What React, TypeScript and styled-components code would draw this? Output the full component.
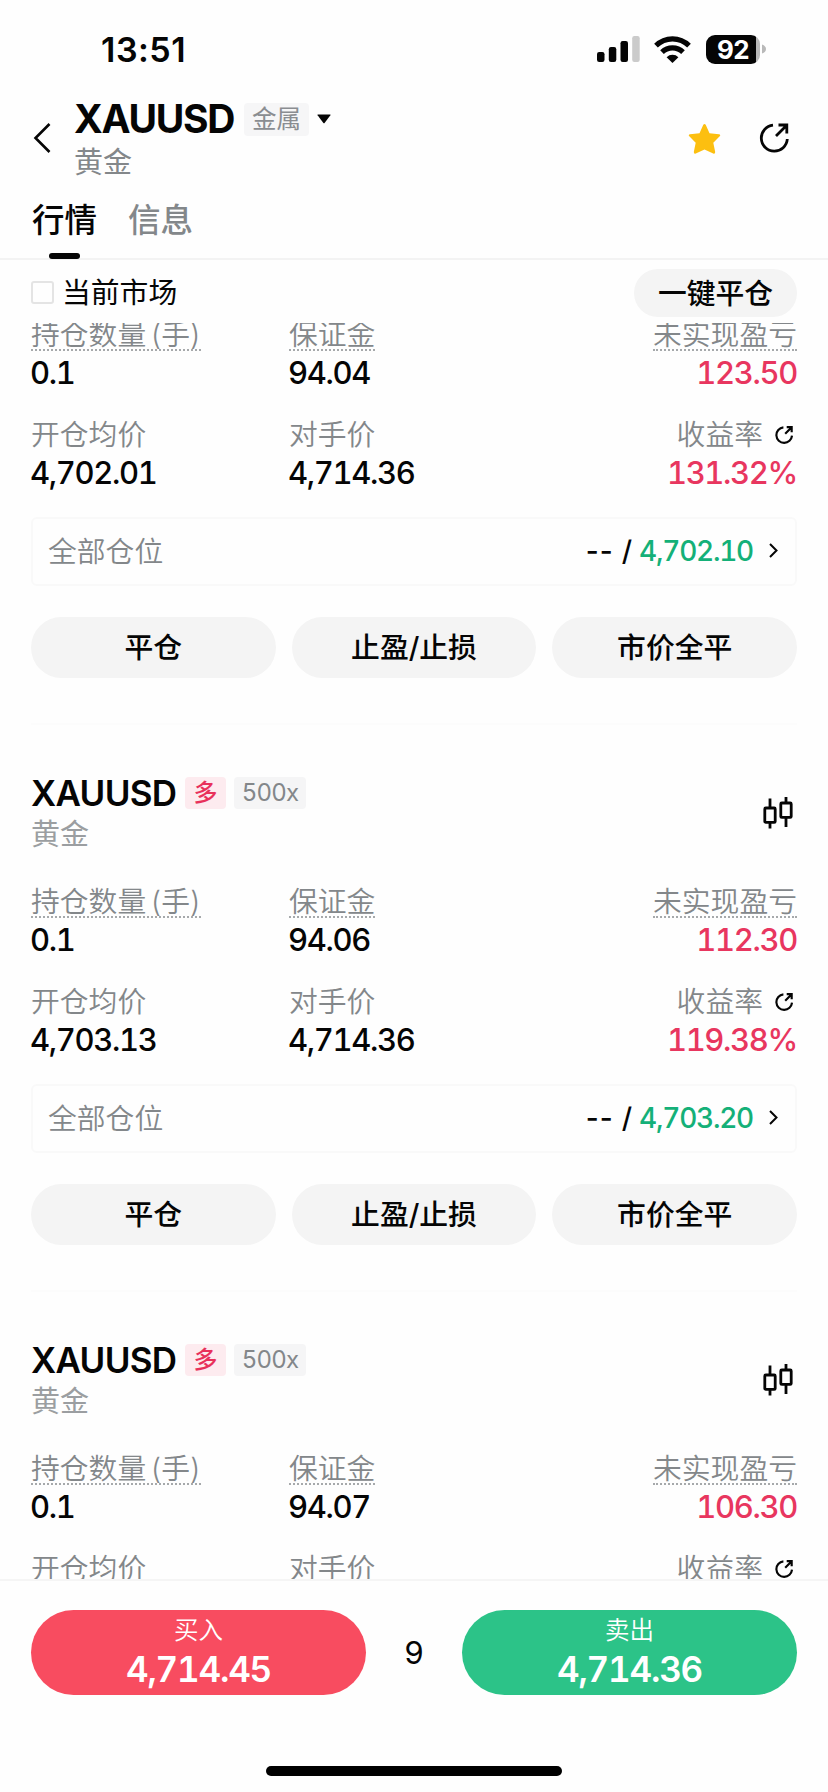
import React from 'react';
import styled, { createGlobalStyle } from 'styled-components';

const GlobalStyle = createGlobalStyle`
  * { box-sizing: border-box; }
  body { margin: 0; background: #fefefe; }
  button { border: 0; padding: 0; font: inherit; color: inherit; }
`;

const Screen = styled.div`
  width: 828px;
  height: 1792px;
  display: flex;
  flex-direction: column;
  overflow: hidden;
  background: #fefefe;
  color: #050505;
  font-family: Inter, 'Noto Sans CJK SC', sans-serif;
  font-variant-numeric: tabular-nums;
  white-space: nowrap;
`;

const StatusBar = styled.div`
  height: 96px;
  flex: none;
  display: flex;
  justify-content: space-between;
  align-items: center;
  padding: 2px 62px 0 101px;
`;

const Clock = styled.span`
  font-size: 34px;
  font-weight: 600;
  font-variant-numeric: normal;
  line-height: 40px;
  letter-spacing: 0.5px;
  padding-top: 2px;
`;

const StatusIcons = styled.div`
  display: flex;
  align-items: center;
`;

const WifiIcon = styled.svg`
  margin-left: 14px;
`;

const Battery = styled.div`
  width: 54px;
  height: 29px;
  margin-left: 15px;
  border-radius: 9px;
  background: linear-gradient(90deg, #050505 50px, #b9b9b9 50px);
  color: #fff;
  font-size: 26px;
  font-weight: 700;
  line-height: 30px;
  letter-spacing: -0.8px;
  text-align: center;
`;

const BatteryTip = styled.svg`
  margin-left: 2px;
`;

const Header = styled.header`
  height: 90px;
  flex: none;
  display: flex;
  padding: 0 39px 0 33px;
`;

const BackIcon = styled.svg`
  margin-top: 26px;
  flex: none;
`;

const TitleBlock = styled.div`
  margin-left: 23px;
  flex: 1;
`;

const TitleRow = styled.div`
  display: flex;
  align-items: center;
  height: 46px;
`;

const Title = styled.h1`
  margin: 0;
  width: 170px;
  font-size: 39px;
  font-weight: 700;
  letter-spacing: -1.3px;
  line-height: 46px;
`;

const Category = styled.span`
  width: 65px;
  height: 33px;
  border-radius: 4px;
  background: #f6f6f7;
  color: #8a8d91;
  font-size: 24.5px;
  line-height: 32px;
  text-align: center;
`;

const Caret = styled.svg`
  margin-left: 8px;
`;

const Subtitle = styled.div<{ $pale?: boolean }>`
  font-size: 29px;
  line-height: 42px;
  color: ${(p) => (p.$pale ? '#9b9ea1' : '#83878a')};
`;

const HeaderActions = styled.div`
  display: flex;
  gap: 38px;
  padding-top: 27px;
`;

const Tabs = styled.nav`
  height: 74px;
  flex: none;
  display: flex;
  gap: 31px;
  padding: 10px 32px 0;
  border-bottom: 2px solid #f3f3f3;
`;

const Tab = styled.div<{ $active?: boolean }>`
  display: flex;
  flex-direction: column;
  align-items: center;
  justify-content: space-between;
  font-size: 32.5px;
  line-height: 50px;
  font-weight: 500;
  color: ${(p) => (p.$active ? '#050505' : '#83878a')};
  &::after {
    content: '';
    width: 31px;
    height: 6px;
    margin-bottom: -1px;
    border-radius: 3px;
    background: ${(p) => (p.$active ? '#050505' : 'transparent')};
  }
`;

const FilterBar = styled.div`
  height: 63px;
  flex: none;
  display: flex;
  align-items: center;
  justify-content: space-between;
  padding: 3px 31px 0;
`;

const MarketFilter = styled.label`
  display: flex;
  align-items: center;
  gap: 8px;
  font-size: 28.8px;
  line-height: 42px;
`;

const CheckBox = styled.span`
  width: 23px;
  height: 23px;
  margin-top: -2px;
  border: 2px solid #e4e4e4;
  border-radius: 3px;
`;

const CloseAll = styled.button`
  width: 163px;
  height: 48px;
  border-radius: 24px;
  background: #f4f4f4;
  font-size: 28.8px;
  font-weight: 500;
  line-height: 47px;
`;

const List = styled.main`
  flex: 1;
  min-height: 0;
  overflow: hidden;
`;

const Position = styled.section<{ $scrolled?: boolean }>`
  margin: ${(p) => (p.$scrolled ? '-10px' : '0')} 31px 0;
  height: ${(p) => (p.$scrolled ? 412 : 566.5)}px;
  border-bottom: 2px solid #fcfcfc;
`;

const PositionHeader = styled.div`
  height: 155px;
  padding-top: 47px;
  display: flex;
  justify-content: space-between;
`;

const SymbolRow = styled.div`
  height: 42px;
  display: flex;
  align-items: center;
`;

const SymbolName = styled.span`
  width: 154px;
  font-size: 35px;
  font-weight: 600;
  letter-spacing: -0.7px;
`;

const Badge = styled.span<{ $tone: 'long' | 'plain' }>`
  width: ${(p) => (p.$tone === 'long' ? 41 : 72)}px;
  height: 32px;
  margin-right: 8px;
  border-radius: 4px;
  text-align: center;
  line-height: 32px;
  font-size: 24px;
  font-weight: ${(p) => (p.$tone === 'long' ? 500 : 400)};
  letter-spacing: ${(p) => (p.$tone === 'long' ? 0 : '-0.8px')};
  color: ${(p) => (p.$tone === 'long' ? '#e8315b' : '#83878a')};
  background: ${(p) => (p.$tone === 'long' ? '#fdebef' : '#f5f5f6')};
`;

const CandleIcon = styled.svg`
  margin: 25px 4px 0 0;
`;

const Metrics = styled.div`
  height: 204px;
  display: grid;
  grid-template-columns: 258px 1fr 1fr;
  grid-auto-rows: 100.4px;
`;

const Metric = styled.div`
  display: flex;
  flex-direction: column;
  align-items: flex-start;
  &:nth-child(3n) { align-items: flex-end; }
`;

const Label = styled.div<{ $dotted?: boolean }>`
  height: 38px;
  display: flex;
  align-items: center;
  gap: 12px;
  padding-top: 8px;
  font-size: 28.8px;
  font-weight: 350;
  line-height: 28px;
  word-spacing: -4px;
  color: #83878a;
  border-bottom: 2px ${(p) => (p.$dotted ? 'dotted #a6a9ab' : 'solid transparent')};
`;

const LabelIcon = styled.span`
  display: flex;
  margin-right: 4px;
`;

const Value = styled.div<{ $gain?: boolean }>`
  margin-left: -1px;
  padding-top: 1px;
  font-size: 31px;
  font-weight: 500;
  line-height: 42px;
  letter-spacing: -1.35px;
  color: ${(p) => (p.$gain ? '#e8365f' : '#050505')};
`;

const StopCard = styled.div`
  height: 69px;
  display: flex;
  align-items: center;
  padding: 0 17px 2px 15px;
  border: 2px solid #f9f9f9;
  border-radius: 6px;
  font-size: 28.8px;
  color: #83878a;
`;

const StopLabel = styled.span`
  flex: 1;
  padding-bottom: 3px;
  font-weight: 350;
`;

const StopValue = styled.span<{ $up?: boolean }>`
  font-size: 28px;
  font-weight: 500;
  font-variant-numeric: ${(p) => (p.$up ? 'tabular-nums' : 'normal')};
  letter-spacing: ${(p) => (p.$up ? '-1.25px' : '0.9px')};
  margin-right: ${(p) => (p.$up ? 16 : 6)}px;
  color: ${(p) => (p.$up ? '#14b078' : '#050505')};
`;

const Actions = styled.div`
  display: flex;
  gap: 16px;
  margin-top: 31px;
`;

const Action = styled.button`
  flex: 1;
  height: 61px;
  border-radius: 31px;
  background: #f4f4f4;
  font-size: 28.8px;
  font-weight: 500;
  line-height: 61px;
`;

const TradeBar = styled.footer`
  height: 213px;
  flex: none;
  padding: 29px 31px 0;
  border-top: 2px solid #f5f5f5;
  display: flex;
  flex-direction: column;
  align-items: center;
`;

const TradeRow = styled.div`
  width: 100%;
  display: flex;
  align-items: center;
`;

const TradeButton = styled.button<{ $side: 'buy' | 'sell' }>`
  width: 335px;
  height: 85px;
  border-radius: 43px;
  display: flex;
  flex-direction: column;
  align-items: center;
  color: #fff;
  background: ${(p) => (p.$side === 'buy' ? '#f84c60' : '#2cc388')};
`;

const TradeLabel = styled.span`
  font-size: 24.5px;
  font-weight: 350;
  line-height: 41px;
`;

const TradePrice = styled.span`
  font-size: 35px;
  font-weight: 600;
  line-height: 36px;
  letter-spacing: -1.2px;
`;

const Spread = styled.span`
  flex: 1;
  text-align: center;
  font-size: 31px;
`;

const HomeIndicator = styled.div`
  width: 296px;
  height: 10px;
  margin-top: 71px;
  border-radius: 5px;
  background: #000;
`;

function ShareIcon({ size, stroke }: { size: number; stroke: number }) {
  return (
    <svg width={size} height={size} viewBox="0 0 30 30" fill="none" stroke="#050505" strokeWidth={stroke}>
      <path d="M14 2.2 A13 13 0 1 0 28.3 16" />
      <path d="M17 13 L27 3 M19.5 2 H27.8 V10.5" />
    </svg>
  );
}

interface PositionData {
  margin: string;
  pnl: string;
  open: string;
  rate: string;
  stop: string;
}

const positions: PositionData[] = [
  { margin: '94.04', pnl: '123.50', open: '4,702.01', rate: '131.32%', stop: '4,702.10' },
  { margin: '94.06', pnl: '112.30', open: '4,703.13', rate: '119.38%', stop: '4,703.20' },
];

function PositionTitle() {
  return (
    <PositionHeader>
      <div>
        <SymbolRow>
          <SymbolName>XAUUSD</SymbolName>
          <Badge $tone="long">多</Badge>
          <Badge $tone="plain">500x</Badge>
        </SymbolRow>
        <Subtitle $pale>黄金</Subtitle>
      </div>
      <CandleIcon width="30" height="32" viewBox="0 0 30 32" fill="none" stroke="#050505" strokeWidth="2.8">
        <path d="M7 1.5V11M7 26V31.5M23 0V5.5M23 21V30" />
        <rect x="1.8" y="11" width="10.4" height="14.4" rx="1" />
        <rect x="17.8" y="6" width="10.4" height="14.4" rx="1" />
      </CandleIcon>
    </PositionHeader>
  );
}

function Figures({ margin, pnl, open, rate }: { margin: string; pnl: string; open?: string; rate?: string }) {
  return (
    <Metrics>
      <Metric><Label $dotted>持仓数量 (手)</Label><Value>0.1</Value></Metric>
      <Metric><Label $dotted>保证金</Label><Value>{margin}</Value></Metric>
      <Metric><Label $dotted>未实现盈亏</Label><Value $gain>{pnl}</Value></Metric>
      <Metric><Label>开仓均价</Label>{open && <Value>{open}</Value>}</Metric>
      <Metric><Label>对手价</Label>{open && <Value>4,714.36</Value>}</Metric>
      <Metric>
        <Label>收益率<LabelIcon><ShareIcon size={18} stroke={3.6} /></LabelIcon></Label>
        {rate && <Value $gain>{rate}</Value>}
      </Metric>
    </Metrics>
  );
}

export default function App() {
  return (
    <Screen>
      <GlobalStyle />
      <StatusBar>
        <Clock>13:51</Clock>
        <StatusIcons>
          <svg width="43" height="26" viewBox="0 0 43 26" fill="#050505">
            <rect x="0" y="16" width="7.5" height="10" rx="2.2" />
            <rect x="11.8" y="11" width="7.5" height="15" rx="2.2" />
            <rect x="23.5" y="5" width="7.5" height="21" rx="2.2" />
            <rect x="35.2" y="0" width="7.5" height="26" rx="2.2" fill="#cbcbcb" />
          </svg>
          <WifiIcon width="37" height="27" viewBox="0 0 37 27" fill="none" stroke="#050505" strokeWidth="5.2">
            <path d="M2 9.7 A23.3 23.3 0 0 1 35 9.7" />
            <path d="M8 16.2 A15 15 0 0 1 29 16.2" />
            <path d="M18.5 27 L12.6 21.2 A8.5 8.5 0 0 1 24.4 21.2 Z" fill="#050505" stroke="none" />
          </WifiIcon>
          <Battery>92</Battery>
          <BatteryTip width="4" height="10" viewBox="0 0 4 10"><path d="M0 0.5 Q4 2 4 5 Q4 8 0 9.5Z" fill="#b9b9b9" /></BatteryTip>
        </StatusIcons>
      </StatusBar>

      <Header>
        <BackIcon width="18" height="32" viewBox="0 0 18 32" fill="none" stroke="#050505" strokeWidth="2.6">
          <path d="M16.5 2 L2.5 16 L16.5 30" />
        </BackIcon>
        <TitleBlock>
          <TitleRow>
            <Title>XAUUSD</Title>
            <Category>金属</Category>
            <Caret width="14" height="10" viewBox="0 0 14 10"><path d="M1 0.5H13Q14 0.5 13.4 1.3L7.6 9Q7 9.7 6.4 9L0.6 1.3Q0 0.5 1 0.5Z" fill="#050505" /></Caret>
          </TitleRow>
          <Subtitle>黄金</Subtitle>
        </TitleBlock>
        <HeaderActions>
          <svg width="33" height="32" viewBox="0 0 33 32" fill="#fcbf10">
            <path d="M15.3 1.8Q16.5 0 17.7 1.8L21.5 10.2L31 11.2Q33 11.8 31.7 13.3L25.3 19.8L27.2 29Q27.2 31.2 25.2 30.5L16.5 26.5L7.8 30.5Q5.8 31.2 5.8 29L7.7 19.8L1.3 13.3Q0 11.8 2 11.2L11.5 10.2Z" />
          </svg>
          <ShareIcon size={30} stroke={2.8} />
        </HeaderActions>
      </Header>

      <Tabs>
        <Tab $active>行情</Tab>
        <Tab>信息</Tab>
      </Tabs>

      <FilterBar>
        <MarketFilter><CheckBox />当前市场</MarketFilter>
        <CloseAll>一键平仓</CloseAll>
      </FilterBar>

      <List>
        {positions.map((p, i) => (
          <Position key={p.open} $scrolled={i === 0}>
            {i > 0 && <PositionTitle />}
            <Figures {...p} />
            <StopCard>
              <StopLabel>全部仓位</StopLabel>
              <StopValue>-- /</StopValue>
              <StopValue $up>{p.stop}</StopValue>
              <svg width="9" height="15" viewBox="0 0 9 15" fill="none" stroke="#050505" strokeWidth="2"><path d="M1 1L7.5 7.5L1 14" /></svg>
            </StopCard>
            <Actions>
              <Action>平仓</Action>
              <Action>止盈/止损</Action>
              <Action>市价全平</Action>
            </Actions>
          </Position>
        ))}
        <Position>
          <PositionTitle />
          <Figures margin="94.07" pnl="106.30" />
        </Position>
      </List>

      <TradeBar>
        <TradeRow>
          <TradeButton $side="buy">
            <TradeLabel>买入</TradeLabel>
            <TradePrice>4,714.45</TradePrice>
          </TradeButton>
          <Spread>9</Spread>
          <TradeButton $side="sell">
            <TradeLabel>卖出</TradeLabel>
            <TradePrice>4,714.36</TradePrice>
          </TradeButton>
        </TradeRow>
        <HomeIndicator />
      </TradeBar>
    </Screen>
  );
}
